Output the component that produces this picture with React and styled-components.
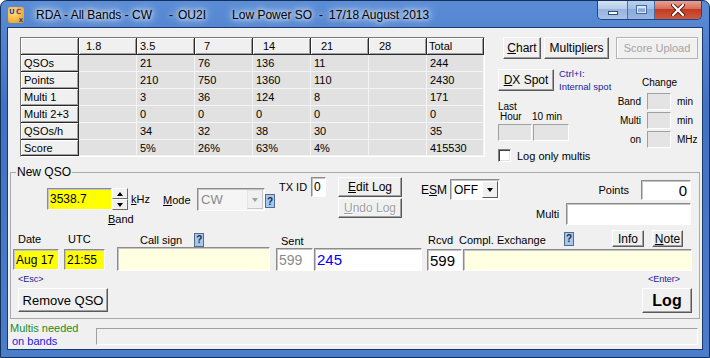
import React from "react";
import styled, { createGlobalStyle } from "styled-components";

const GlobalStyle = createGlobalStyle`
  * { box-sizing: border-box; }
  html, body { margin: 0; padding: 0; background: #ffffff; }
  body {
    font-family: "Liberation Sans", Arial, sans-serif;
    font-size: 11px;
    color: #000;
  }
`;

const bands = ["1.8", "3.5", "7", "14", "21", "28", "Total"];
const headIndent = [7, 3, 9, 10, 10, 10, 2];
const rows = [
  ["QSOs", "", "21", "76", "136", "11", "", "244"],
  ["Points", "", "210", "750", "1360", "110", "", "2430"],
  ["Multi 1", "", "3", "36", "124", "8", "", "171"],
  ["Multi 2+3", "", "0", "0", "0", "0", "", "0"],
  ["QSOs/h", "", "34", "32", "38", "30", "", "35"],
  ["Score", "", "5%", "26%", "63%", "4%", "", "415530"],
];

const App = () => {
  return (
    <>
      <GlobalStyle />
      <Window>
        <TitleBar>
          <AppIcon>
            <IconLetter $c="#2a3fb0">U</IconLetter>
            <IconLetter $c="#7a2a9a">C</IconLetter>
            <IconLetter $c="#2a3fb0" $low>x</IconLetter>
          </AppIcon>
          <TitlePart $gap={12}>RDA - All Bands - CW</TitlePart>
          <TitlePart $gap={17}>-</TitlePart>
          <TitlePart $gap={5}>OU2I</TitlePart>
          <TitlePart $gap={26}>Low Power SO</TitlePart>
          <TitlePart $gap={7}>-</TitlePart>
          <TitlePart $gap={6}>17/18 August 2013</TitlePart>
          <WinControls>
            <WinBtn $w={29}>
              <MinGlyph />
            </WinBtn>
            <WinBtn $w={27} $faded>
              <MaxGlyph />
            </WinBtn>
            <WinBtn $w={47} $close>
              <svg width="14" height="12" viewBox="0 0 14 12">
                <path d="M2 1 L12 11 M12 1 L2 11" stroke="#5a1a10" strokeWidth="4" strokeLinecap="round" />
                <path d="M2 1 L12 11 M12 1 L2 11" stroke="#ffffff" strokeWidth="2.2" strokeLinecap="round" />
              </svg>
            </WinBtn>
          </WinControls>
        </TitleBar>

        <Client>
          <TopSection>
            <StatsGrid>
              <FixedCell />
              {bands.map((b, i) => (
                <FixedCell key={b} $indent={headIndent[i]}>
                  {b}
                </FixedCell>
              ))}
              {rows.map((r) =>
                r.map((v, i) =>
                  i === 0 ? (
                    <FixedCell key={r[0] + i}>{v}</FixedCell>
                  ) : (
                    <DataCell key={r[0] + i}>{v}</DataCell>
                  )
                )
              )}
            </StatsGrid>

            <SidePanel>
              <ButtonRow>
                <Btn $w={38} $ml={5}>
                  <u>C</u>hart
                </Btn>
                <Btn $w={65} $ml={3}>
                  Multip<u>l</u>iers
                </Btn>
                <FlatBtn>Score Upload</FlatBtn>
              </ButtonRow>
              <SideLower>
                <SideLeft>
                  <DxRow>
                    <Btn $w={56} $mt={2}>
                      <u>D</u>X Spot
                    </Btn>
                    <SpotHint>
                      Ctrl+I:
                      <br />
                      Internal spot
                    </SpotHint>
                  </DxRow>
                  <RateHead>
                    <div>Last</div>
                    <RateLine>
                      <RateName>Hour</RateName>
                      <span>10 min</span>
                    </RateLine>
                  </RateHead>
                  <RateBoxes>
                    <Readout $w={34} />
                    <Readout $w={36} />
                  </RateBoxes>
                  <CheckRow>
                    <CheckBox />
                    Log only multis
                  </CheckRow>
                </SideLeft>
                <ChangeCol>
                  <ChangeTitle>Change</ChangeTitle>
                  <ChangeGrid>
                    <ChangeLabel>Band</ChangeLabel>
                    <Readout $w={24} />
                    <span>min</span>
                    <ChangeLabel>Multi</ChangeLabel>
                    <Readout $w={24} />
                    <span>min</span>
                    <ChangeLabel>on</ChangeLabel>
                    <Readout $w={24} />
                    <span>MHz</span>
                  </ChangeGrid>
                </ChangeCol>
              </SideLower>
            </SidePanel>
          </TopSection>

          <Group>
            <Legend>New QSO</Legend>

            <RowA>
              <FreqBlock>
                <FreqLine>
                  <Field $w={65} $h={22} $bg="#ffff00">
                    3538.7
                  </Field>
                  <Spinner>
                    <SpinBtn>
                      <Tri $up />
                    </SpinBtn>
                    <SpinBtn>
                      <Tri />
                    </SpinBtn>
                  </Spinner>
                  <Caption $pl={3}>
                    <u>k</u>Hz
                  </Caption>
                </FreqLine>
                <Caption $pl={61} $mt={2}>
                  <u>B</u>and
                </Caption>
              </FreqBlock>

              <ModeGroup>
                <Caption $w={34}>
                  <u>M</u>ode
                </Caption>
                <Combo $w={68} $h={23} $disabled>
                  <ComboText $size={13} $color="#8a8a8a">
                    CW
                  </ComboText>
                  <DropBtn $flat>
                    <Tri $c="#a0a0a0" />
                  </DropBtn>
                </Combo>
                <HelpTag $self>?</HelpTag>
              </ModeGroup>

              <InlineGroup $ml={4} $mt={1}>
                <Caption $w={32}>TX ID</Caption>
                <Field $w={15} $h={20}>
                  0
                </Field>
              </InlineGroup>

              <ButtonStack>
                <Btn $w={64} $h={20}>
                  <u>E</u>dit Log
                </Btn>
                <Btn $w={64} $h={20} $disabled>
                  <u>U</u>ndo Log
                </Btn>
              </ButtonStack>

              <InlineGroup $ml={19} $mt={3}>
                <Caption $w={29} $size={12}>
                  E<u>S</u>M
                </Caption>
                <Combo $w={50} $h={21}>
                  <ComboText $size={12}>OFF</ComboText>
                  <DropBtn>
                    <Tri />
                  </DropBtn>
                </Combo>
              </InlineGroup>

              <PointsBlock>
                <PointsLine>
                  <Caption>Points</Caption>
                  <Field $w={50} $h={20} $right $size={15}>
                    0
                  </Field>
                </PointsLine>
                <MultiLine>
                  <Caption>Multi</Caption>
                  <Field $w={125} $h={22} />
                </MultiLine>
              </PointsBlock>
            </RowA>

            <RowB>
              <Column $ml={2} $w={46}>
                <Caption $pl={5} $mt={6}>
                  Date
                </Caption>
                <Field $w={46} $h={21} $bg="#ffff00" $mt={3}>
                  Aug 17
                </Field>
              </Column>
              <Column $ml={5} $w={41}>
                <Caption $pl={4} $mt={6}>
                  UTC
                </Caption>
                <Field $w={41} $h={21} $bg="#ffff00" $mt={3}>
                  21:55
                </Field>
              </Column>
              <Column $ml={12} $w={153}>
                <LabelLine $mt={6} $h={15}>
                  <Caption $pl={23}>Call sign</Caption>
                  <HelpTag $ml={12}>?</HelpTag>
                </LabelLine>
                <Field $w={153} $h={24} $bg="#ffffe1" />
              </Column>
              <Column $ml={6} $w={146}>
                <Caption $pl={5} $mt={8}>
                  Sent
                </Caption>
                <FieldPair>
                  <Field $w={37} $h={23} $size={14} $color="#8a8a8a">
                    599
                  </Field>
                  <Field $w={108} $h={23} $size={15} $color="#0000ff">
                    245
                  </Field>
                </FieldPair>
              </Column>
              <Column $ml={5} $w={265}>
                <LabelLine $mt={4} $h={17}>
                  <Caption $w={32} $pl={1} $pt={3}>
                    Rcvd
                  </Caption>
                  <Caption $w={105} $pt={3}>
                    Compl. Exchange
                  </Caption>
                  <HelpTag>?</HelpTag>
                  <Btn $w={32} $h={17} $ml={38}>
                    Info
                  </Btn>
                  <Btn $w={31} $h={17} $ml={8}>
                    <u>N</u>ote
                  </Btn>
                </LabelLine>
                <FieldPair $mt={2}>
                  <Field $w={35} $h={22} $size={15}>
                    599
                  </Field>
                  <Field $w={229} $h={22} $bg="#ffffe1" />
                </FieldPair>
              </Column>
            </RowB>

            <RowC>
              <Column $ml={7}>
                <KeyHint>&lt;Esc&gt;</KeyHint>
                <Btn $w={90} $h={24} $mt={3} $size={13}>
                  Remove QSO
                </Btn>
              </Column>
              <LogColumn>
                <KeyHint $pl={6}>&lt;Enter&gt;</KeyHint>
                <Btn $w={50} $h={25} $mt={3} $size={16} $bold>
                  Log
                </Btn>
              </LogColumn>
            </RowC>
          </Group>

          <StatusBar>
            <StatusText>
              <Caption $color="#1f8a1f" $mt={3} $lh={13}>
                Multis needed
              </Caption>
              <Caption $color="#1a1ae6" $pl={2} $lh={13}>
                on bands
              </Caption>
            </StatusText>
            <StatusBox />
          </StatusBar>
        </Client>
      </Window>
    </>
  );
};

export default App;

/* ---------- window frame ---------- */

const Window = styled.div`
  width: 710px;
  height: 358px;
  display: flex;
  flex-direction: column;
  padding: 0 7px 8px 7px;
  border: 1px solid #15305c;
  border-radius: 7px 7px 0 0;
  background: linear-gradient(180deg, #5a8cd6 0%, #3f72c2 30%, #4a7ecb 100%);
  overflow: hidden;
`;

const TitleBar = styled.div`
  height: 27px;
  flex: none;
  display: flex;
  align-items: center;
  font-size: 12px;
  color: #000;
`;

const AppIcon = styled.div`
  width: 16px;
  height: 16px;
  flex: none;
  position: relative;
  border-radius: 2px;
  background: radial-gradient(circle at 35% 35%, #ffe27a, #f0a830 70%, #d98a20);
  font-family: "DejaVu Sans", sans-serif;
  font-weight: 700;
  font-size: 7px;
  line-height: 8px;
  display: flex;
  flex-wrap: wrap;
  padding: 1px 0 0 1px;
`;

const IconLetter = styled.span`
  color: ${(p) => p.$c};
  width: ${(p) => (p.$low ? "14px" : "7px")};
  text-align: ${(p) => (p.$low ? "right" : "left")};
`;

const TitlePart = styled.span`
  margin-left: ${(p) => p.$gap}px;
  white-space: pre;
  text-shadow: 0 0 4px #ffffff, 0 0 9px rgba(255, 255, 255, 0.95), 0 0 16px rgba(225, 238, 255, 0.9);
`;

const WinControls = styled.div`
  display: flex;
  align-self: flex-start;
  margin-left: auto;
  margin-top: -1px;
  height: 20px;
  border: 1px solid #23467e;
  border-top: none;
  border-radius: 0 0 5px 5px;
  overflow: hidden;
`;

const WinBtn = styled.div`
  width: ${(p) => p.$w}px;
  height: 100%;
  display: flex;
  align-items: center;
  justify-content: center;
  opacity: ${(p) => (p.$faded ? 0.8 : 1)};
  background: ${(p) =>
    p.$close
      ? "linear-gradient(180deg, #eaa996 0%, #d7705a 45%, #c23b22 50%, #cf5a3e 100%)"
      : "linear-gradient(180deg, #d8e4f4 0%, #b6cce9 45%, #97b3de 50%, #aac3e7 100%)"};
  & + & {
    border-left: 1px solid #4a6a9e;
  }
`;

const MinGlyph = styled.div`
  width: 10px;
  height: 4px;
  margin-top: 6px;
  background: #fff;
  border: 1px solid #2f4a78;
`;

const MaxGlyph = styled.div`
  width: 11px;
  height: 9px;
  border: 1px solid #3f5f92;
  box-shadow: inset 0 2px 0 #ffffff, inset 0 0 0 1px #ffffff;
`;

const Client = styled.div`
  flex: 1;
  display: flex;
  flex-direction: column;
  background: #f0f0f0;
  box-shadow: 0 0 0 1px #1b3a70;
`;

/* ---------- top: statistics table + side panel ---------- */

const TopSection = styled.div`
  display: flex;
  align-items: flex-start;
  height: 124px;
  margin-top: 9px;
  padding-left: 12px;
  flex: none;
`;

const StatsGrid = styled.div`
  display: grid;
  grid-template-columns: repeat(7, 58px) 57px;
  grid-template-rows: 17px repeat(5, 17px) 16px;
  width: 465px;
  height: 120px;
  flex: none;
  border: 1px solid;
  border-color: #7a7a7a #ffffff #ffffff #7a7a7a;
  background: #e1e1e1;
  font-size: 11px;
`;

const FixedCell = styled.div`
  display: flex;
  align-items: center;
  padding-left: ${(p) => p.$indent ?? 3}px;
  background: #f0f0f0;
  border-right: 1px solid #2a2a2a;
  border-bottom: 1px solid #2a2a2a;
  box-shadow: inset 1px 1px 0 #ffffff, inset -1px -1px 0 #a0a0a0;
  white-space: nowrap;
`;

const DataCell = styled.div`
  display: flex;
  align-items: center;
  padding-left: 3px;
  background: #e1e1e1;
  border-right: 1px solid #f4f4f4;
  border-bottom: 1px solid #f4f4f4;
  white-space: nowrap;
`;

const SidePanel = styled.div`
  width: 200px;
  margin-left: 13px;
  flex: none;
  display: flex;
  flex-direction: column;
`;

const ButtonRow = styled.div`
  display: flex;
  height: 22px;
`;

const Btn = styled.div`
  width: ${(p) => p.$w}px;
  height: ${(p) => p.$h || 22}px;
  margin-left: ${(p) => p.$ml || 0}px;
  margin-top: ${(p) => p.$mt || 0}px;
  flex: none;
  display: flex;
  align-items: center;
  justify-content: center;
  background: #f0f0f0;
  border: 1px solid;
  border-color: #ffffff #5a5a5a #5a5a5a #ffffff;
  box-shadow: inset -1px -1px 0 #a0a0a0;
  font-size: ${(p) => p.$size || 12}px;
  font-weight: ${(p) => (p.$bold ? 700 : 400)};
  color: ${(p) => (p.$disabled ? "#a0a0a0" : "#000")};
  text-shadow: ${(p) => (p.$disabled ? "1px 1px 0 #ffffff" : "none")};
  white-space: nowrap;
  cursor: default;
`;

const FlatBtn = styled.div`
  width: 82px;
  height: 22px;
  margin-left: 7px;
  display: flex;
  align-items: center;
  justify-content: center;
  border: 1px solid #b4b4b4;
  box-shadow: inset 1px 1px 0 #ffffff;
  color: #a3a3a3;
  font-size: 11px;
`;

const SideLower = styled.div`
  display: flex;
`;

const SideLeft = styled.div`
  width: 114px;
  flex: none;
  display: flex;
  flex-direction: column;
`;

const DxRow = styled.div`
  display: flex;
  align-items: flex-start;
  margin-top: 8px;
`;

const SpotHint = styled.div`
  margin-left: 5px;
  font-size: 9.5px;
  line-height: 13px;
  color: #1c1ca0;
  white-space: nowrap;
`;

const RateHead = styled.div`
  margin-top: 9px;
  font-size: 10px;
  line-height: 10px;
`;

const RateLine = styled.div`
  display: flex;
`;

const RateName = styled.span`
  width: 34px;
  padding-left: 2px;
`;

const RateBoxes = styled.div`
  display: flex;
  gap: 1px;
  margin-top: 2px;
`;

const Readout = styled.div`
  width: ${(p) => p.$w}px;
  height: 17px;
  background: #e4e4e4;
  border: 1px solid;
  border-color: #a0a0a0 #ffffff #ffffff #a0a0a0;
`;

const CheckRow = styled.div`
  display: flex;
  align-items: center;
  gap: 6px;
  margin-top: 8px;
  font-size: 11px;
  white-space: nowrap;
`;

const CheckBox = styled.div`
  width: 13px;
  height: 13px;
  background: #fff;
  border: 1px solid;
  border-color: #808080 #ffffff #ffffff #808080;
  box-shadow: inset 1px 1px 0 #404040, inset -1px -1px 0 #e3e3e3;
`;

const ChangeCol = styled.div`
  width: 86px;
  flex: none;
  font-size: 10px;
`;

const ChangeTitle = styled.div`
  margin-top: 18px;
  padding-left: 30px;
  line-height: 12px;
`;

const ChangeGrid = styled.div`
  display: grid;
  grid-template-columns: 29px 24px auto;
  grid-auto-rows: 17px;
  column-gap: 6px;
  row-gap: 2px;
  margin-top: 4px;
  align-items: center;
`;

const ChangeLabel = styled.span`
  text-align: right;
`;

/* ---------- New QSO group ---------- */

const Group = styled.fieldset`
  margin: 4px 0 0 2px;
  padding: 0;
  width: 690px;
  height: 154px;
  min-inline-size: 0;
  border: 1px solid #a9a9a9;
  flex: none;
`;

const Legend = styled.legend`
  margin-left: 5px;
  padding: 0 1px;
  font-size: 12px;
  line-height: 14px;
`;

const Caption = styled.span`
  display: block;
  flex: none;
  width: ${(p) => (p.$w ? `${p.$w}px` : "auto")};
  padding-left: ${(p) => p.$pl || 0}px;
  padding-top: ${(p) => p.$pt || 0}px;
  margin-top: ${(p) => p.$mt || 0}px;
  font-size: ${(p) => p.$size || 11}px;
  line-height: ${(p) => p.$lh || 14}px;
  color: ${(p) => p.$color || "#000"};
  white-space: nowrap;
`;

const Field = styled.div`
  width: ${(p) => p.$w}px;
  height: ${(p) => p.$h}px;
  margin-top: ${(p) => p.$mt || 0}px;
  flex: none;
  display: flex;
  align-items: center;
  justify-content: ${(p) => (p.$right ? "flex-end" : "flex-start")};
  padding: 0 3px 0 2px;
  background: ${(p) => p.$bg || "#ffffff"};
  color: ${(p) => p.$color || "#000"};
  font-size: ${(p) => p.$size || 12}px;
  border: 1px solid;
  border-color: #8c8c8c #ffffff #ffffff #8c8c8c;
  box-shadow: inset 1px 1px 0 #c4c4c4;
  white-space: nowrap;
`;

const HelpTag = styled.div`
  width: 10px;
  height: 14px;
  flex: none;
  margin-left: ${(p) => p.$ml || 0}px;
  align-self: ${(p) => (p.$self ? "flex-end" : "auto")};
  margin-bottom: ${(p) => (p.$self ? "3px" : "0")};
  display: flex;
  align-items: center;
  justify-content: center;
  background: #a4c8f0;
  border: 1px solid #556b8c;
  font-size: 10px;
  font-weight: 700;
  color: #1d2b4a;
`;

const RowA = styled.div`
  display: flex;
  align-items: flex-start;
  height: 50px;
  margin-top: -3px;
`;

const FreqBlock = styled.div`
  width: 106px;
  margin: 12px 0 0 36px;
  flex: none;
`;

const FreqLine = styled.div`
  display: flex;
  align-items: center;
`;

const Spinner = styled.div`
  width: 16px;
  height: 22px;
  display: flex;
  flex-direction: column;
`;

const SpinBtn = styled.div`
  height: 11px;
  display: flex;
  align-items: center;
  justify-content: center;
  background: #f0f0f0;
  border: 1px solid;
  border-color: #ffffff #6a6a6a #6a6a6a #ffffff;
`;

const Tri = styled.span`
  width: 0;
  height: 0;
  border-left: 3.5px solid transparent;
  border-right: 3.5px solid transparent;
  ${(p) => (p.$up ? "border-bottom" : "border-top")}: 4px solid ${(p) => p.$c || "#000"};
`;

const ModeGroup = styled.div`
  display: flex;
  align-items: center;
  height: 23px;
  margin: 12px 0 0 10px;
  flex: none;
`;

const Combo = styled.div`
  width: ${(p) => p.$w}px;
  height: ${(p) => p.$h}px;
  flex: none;
  display: flex;
  align-items: center;
  justify-content: space-between;
  padding: 1px 1px 1px 3px;
  background: ${(p) => (p.$disabled ? "#f5f5f5" : "#ffffff")};
  border: 1px solid;
  border-color: #8c8c8c #ffffff #ffffff #8c8c8c;
  box-shadow: inset 1px 1px 0 #c4c4c4;
`;

const ComboText = styled.span`
  font-size: ${(p) => p.$size}px;
  color: ${(p) => p.$color || "#000"};
`;

const DropBtn = styled.div`
  width: 16px;
  height: 100%;
  display: flex;
  align-items: center;
  justify-content: center;
  background: #f0f0f0;
  border: 1px solid;
  border-color: ${(p) => (p.$flat ? "#e6e6e6 #c8c8c8 #c8c8c8 #e6e6e6" : "#ffffff #5a5a5a #5a5a5a #ffffff")};
`;

const InlineGroup = styled.div`
  display: flex;
  align-items: center;
  margin: ${(p) => p.$mt}px 0 0 ${(p) => p.$ml}px;
  flex: none;
`;

const ButtonStack = styled.div`
  display: flex;
  flex-direction: column;
  gap: 1px;
  margin: 1px 0 0 12px;
  flex: none;
`;

const PointsBlock = styled.div`
  width: 155px;
  margin: 4px 0 0 36px;
  flex: none;
`;

const PointsLine = styled.div`
  display: flex;
  justify-content: flex-end;
  align-items: center;
  gap: 12px;
`;

const MultiLine = styled.div`
  display: flex;
  justify-content: space-between;
  align-items: center;
  margin-top: 3px;
`;

const RowB = styled.div`
  display: flex;
  align-items: flex-start;
  height: 45px;
`;

const Column = styled.div`
  display: flex;
  flex-direction: column;
  align-items: flex-start;
  width: ${(p) => (p.$w ? `${p.$w}px` : "auto")};
  margin-left: ${(p) => p.$ml || 0}px;
  flex: none;
`;

const LabelLine = styled.div`
  display: flex;
  align-items: center;
  height: ${(p) => p.$h}px;
  margin-top: ${(p) => p.$mt}px;
`;

const FieldPair = styled.div`
  display: flex;
  gap: 1px;
  margin-top: ${(p) => p.$mt || 0}px;
`;

const RowC = styled.div`
  display: flex;
  align-items: flex-start;
`;

const KeyHint = styled.span`
  margin-top: 3px;
  padding-left: ${(p) => p.$pl || 0}px;
  font-size: 9px;
  line-height: 11px;
  color: #1c1c90;
`;

const LogColumn = styled.div`
  display: flex;
  flex-direction: column;
  width: 50px;
  margin-left: auto;
  margin-right: 7px;
`;

/* ---------- status line ---------- */

const StatusBar = styled.div`
  display: flex;
  align-items: flex-start;
  flex: 1;
`;

const StatusText = styled.div`
  width: 86px;
  margin-left: 2px;
  flex: none;
`;

const StatusBox = styled.div`
  width: 602px;
  height: 17px;
  margin-top: 9px;
  border: 1px solid;
  border-color: #a0a0a0 #ffffff #ffffff #a0a0a0;
`;
